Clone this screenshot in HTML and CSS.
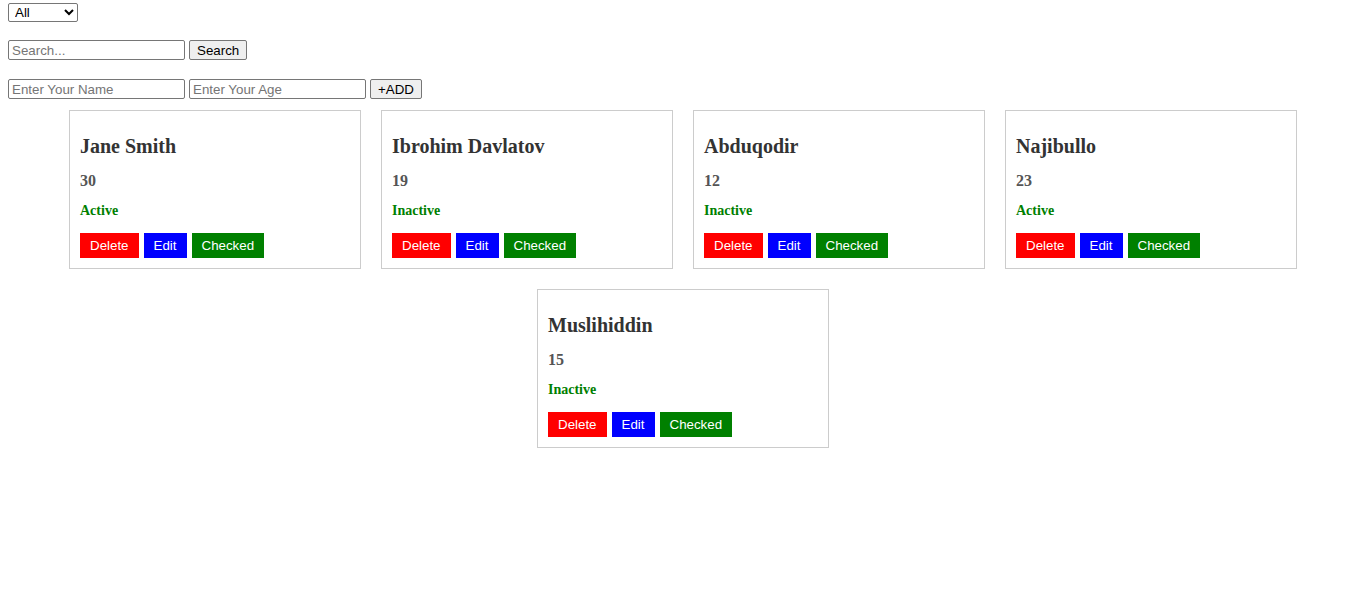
FILE: index.html
```html
<!DOCTYPE html>
<html>
<head>
<meta charset="utf-8">
<link rel="stylesheet" href="styles.css">
</head>
<body>
<div class="controls">
  <div class="row row-filter">
    <select class="filter">
      <option>All</option>
      <option>Active</option>
      <option>Inactive</option>
    </select>
  </div>
  <div class="row row-search">
    <input class="field" type="text" placeholder="Search...">
    <button class="btn">Search</button>
  </div>
  <div class="row row-add">
    <input class="field" type="text" placeholder="Enter Your Name">
    <input class="field" type="text" placeholder="Enter Your Age">
    <button class="btn">+ADD</button>
  </div>
</div>
<div class="cards">
  <div class="card">
    <h3 class="name">Jane Smith</h3>
    <h4 class="age">30</h4>
    <h5 class="status">Active</h5>
    <div class="actions"><button class="act del">Delete</button><button class="act edit">Edit</button><button class="act chk">Checked</button></div>
  </div>
  <div class="card">
    <h3 class="name">Ibrohim Davlatov</h3>
    <h4 class="age">19</h4>
    <h5 class="status">Inactive</h5>
    <div class="actions"><button class="act del">Delete</button><button class="act edit">Edit</button><button class="act chk">Checked</button></div>
  </div>
  <div class="card">
    <h3 class="name">Abduqodir</h3>
    <h4 class="age">12</h4>
    <h5 class="status">Inactive</h5>
    <div class="actions"><button class="act del">Delete</button><button class="act edit">Edit</button><button class="act chk">Checked</button></div>
  </div>
  <div class="card">
    <h3 class="name">Najibullo</h3>
    <h4 class="age">23</h4>
    <h5 class="status">Active</h5>
    <div class="actions"><button class="act del">Delete</button><button class="act edit">Edit</button><button class="act chk">Checked</button></div>
  </div>
  <div class="card">
    <h3 class="name">Muslihiddin</h3>
    <h4 class="age">15</h4>
    <h5 class="status">Inactive</h5>
    <div class="actions"><button class="act del">Delete</button><button class="act edit">Edit</button><button class="act chk">Checked</button></div>
  </div>
</div>
</body>
</html>
```
FILE: styles.css
```css
html, body {
  background: #fff;
}
body {
  margin: 0 8px;
  font-family: "Liberation Serif", "Times New Roman", serif;
}
.controls {
  display: flex;
  flex-direction: column;
  padding-top: 3px;
}
.row {
  display: flex;
  gap: 4px;
  align-items: flex-start;
}
.row-search {
  margin-top: 18px;
}
.row-add {
  margin-top: 19px;
}
.filter {
  box-sizing: border-box;
  width: 70px;
  height: 19px;
  margin: 0;
  padding: 0 0 0 2px;
  font-family: "Liberation Sans", Arial, sans-serif;
  font-size: 13.33px;
  color: #000;
  background: #fff;
  border: 1px solid #767676;
  border-radius: 2px;
}
.field {
  box-sizing: border-box;
  width: 177px;
  height: 20px;
  margin: 0;
  padding: 1px 3px;
  font-family: "Liberation Sans", Arial, sans-serif;
  font-size: 13.33px;
  color: #000;
  background: #fff;
  border: 1px solid #767676;
  border-radius: 2px;
}
.field::placeholder {
  color: #757575;
}
.btn {
  box-sizing: border-box;
  height: 20px;
  margin: 0;
  padding: 0 7px;
  font-family: "Liberation Sans", Arial, sans-serif;
  font-size: 13.33px;
  color: #000;
  background: #efefef;
  border: 1px solid #767676;
  border-radius: 2px;
}
.cards {
  display: flex;
  flex-wrap: wrap;
  justify-content: center;
  gap: 20px;
  padding-left: 16px;
  margin-top: 11px;
}
.card {
  box-sizing: border-box;
  width: 292px;
  height: 159px;
  padding: 10px;
  border: 1px solid #cccccc;
  display: flex;
  flex-direction: column;
}
.name {
  margin: 14px 0 0;
  font-size: 20px;
  font-weight: bold;
  color: #333;
}
.age {
  margin: 14px 0 0;
  font-size: 16px;
  font-weight: bold;
  color: #555;
}
.status {
  margin: 13px 0 0;
  font-size: 14px;
  font-weight: bold;
  color: #008000;
}
.actions {
  display: flex;
  gap: 5px;
  margin-top: 14px;
}
.act {
  height: 25px;
  margin: 0;
  padding: 0 10px;
  border: none;
  font-family: "Liberation Sans", Arial, sans-serif;
  font-size: 13.33px;
  color: #fff;
}
.del {
  background: #ff0000;
}
.edit {
  background: #0000ff;
}
.chk {
  background: #008000;
}
```
